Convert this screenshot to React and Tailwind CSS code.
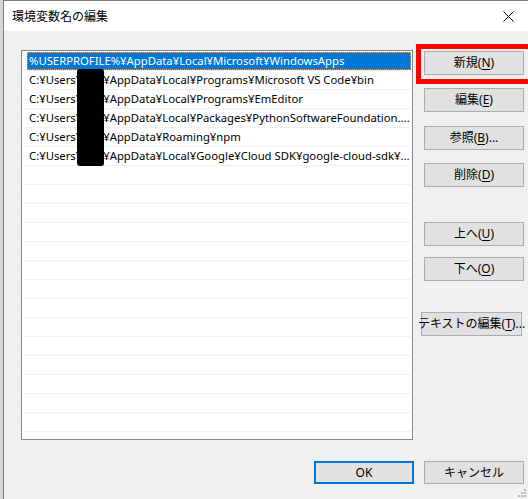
import React from "react";

const rows = [
  { pre: "%USERPROFILE%¥AppData¥Local¥Microsoft¥WindowsApps", selected: true },
  { pre: "C:¥Users¥", user: true, post: "¥AppData¥Local¥Programs¥Microsoft VS Code¥bin" },
  { pre: "C:¥Users¥", user: true, post: "¥AppData¥Local¥Programs¥EmEditor" },
  { pre: "C:¥Users¥", user: true, post: "¥AppData¥Local¥Packages¥PythonSoftwareFoundation...." },
  { pre: "C:¥Users¥", user: true, post: "¥AppData¥Roaming¥npm" },
  { pre: "C:¥Users¥", user: true, post: "¥AppData¥Local¥Google¥Cloud SDK¥google-cloud-sdk¥..." },
];

function Btn({ label, k, tail = "", className = "" }) {
  return (
    <button className={"h-[24px] w-[100px] bg-[#e1e1e1] border border-[#adadad] text-black flex items-center justify-center whitespace-nowrap " + className}>
      {label}(<span className="underline underline-offset-2">{k}</span>){tail}
    </button>
  );
}

export default function App() {
  const empty = Array.from({ length: 20 - rows.length });
  return (
    <div className="w-[528px] h-[499px] flex overflow-hidden bg-[#f0f0f0] text-[12px] text-black font-['Noto_Sans','Noto_Sans_CJK_JP',sans-serif]">
      <div className="w-[3px] shrink-0 bg-[#d6d6d6]" />
      <div className="flex-1 flex flex-col border-l border-t border-[#7a7a7a] relative">
        {/* title bar */}
        <div className="h-[30px] bg-white flex items-center justify-between pl-[8px] pr-[14px] shrink-0">
          <span className="font-['Noto_Sans_CJK_JP',sans-serif] text-[12px]">環境変数名の編集</span>
          <svg width="11" height="11" viewBox="0 0 11 11">
            <path d="M0.5 0.5 L10.5 10.5 M10.5 0.5 L0.5 10.5" stroke="#000" strokeWidth="1" />
          </svg>
        </div>

        {/* body */}
        <div className="flex-1 pl-[17px] pt-[19px] pr-[4px] relative">
          <div className="flex">
            {/* list */}
            <div className="relative w-[392px] h-[390px] border border-[#828790] bg-white pt-[1px] overflow-hidden text-[11.3px]">
              {rows.map((r, i) => (
                <div key={i} className="h-[19px] border-b border-[#f0f0f0] mx-[1px]">
                  <div
                    className={
                      "ml-[4px] h-[18px] pl-[2px] leading-[18px] whitespace-nowrap overflow-hidden " +
                      (r.selected ? "bg-[#0078d7] text-white outline-1 outline-dotted outline-offset-[-1px] outline-[#f0a050]" : "")
                    }
                  >
                    {r.pre}
                    {r.user && <span className="inline-block w-[21px]" />}
                    {r.post}
                  </div>
                </div>
              ))}
              {empty.map((_, i) => (
                <div key={"e" + i} className="h-[19px] border-b border-[#f0f0f0] mx-[1px]" />
              ))}
              {/* redaction */}
              <div className="absolute left-[55px] top-[18px] w-[27px] h-[97px] bg-black rounded-[3px]" />
            </div>

            {/* buttons */}
            <div className="ml-[11px] pt-[1px] flex flex-col">
              <Btn label="新規" k="N" />
              <Btn label="編集" k="E" className="mt-[13px]" />
              <Btn label="参照" k="B" tail="..." className="mt-[14px]" />
              <Btn label="削除" k="D" className="mt-[13px]" />
              <Btn label="上へ" k="U" className="mt-[35px]" />
              <Btn label="下へ" k="O" className="mt-[11px]" />
              <Btn label="テキストの編集" k="T" tail="..." className="mt-[31px] w-[101px] -ml-[3px]" />
            </div>
          </div>

          {/* footer */}
          <div className="flex justify-end gap-[10px] mt-[21px]">
            <button className="h-[23px] w-[100px] bg-[#e1e1e1] border-2 border-[#0078d7]">OK</button>
            <button className="h-[23px] w-[100px] bg-[#e1e1e1] border border-[#adadad]">キャンセル</button>
          </div>

          {/* resize grip */}
          <svg className="absolute right-[2px] bottom-[2px]" width="8" height="8" viewBox="0 0 8 8">
            <rect x="6" y="0" width="2" height="2" fill="#bcbcbc" />
            <rect x="3" y="3" width="2" height="2" fill="#bcbcbc" />
            <rect x="6" y="3" width="2" height="2" fill="#bcbcbc" />
            <rect x="0" y="6" width="2" height="2" fill="#bcbcbc" />
            <rect x="3" y="6" width="2" height="2" fill="#bcbcbc" />
            <rect x="6" y="6" width="2" height="2" fill="#bcbcbc" />
          </svg>
        </div>

        {/* red annotation box */}
        <div className="absolute left-[412px] top-[43px] w-[120px] h-[40px] border-[5px] border-[#ff0000]" />
      </div>
    </div>
  );
}
